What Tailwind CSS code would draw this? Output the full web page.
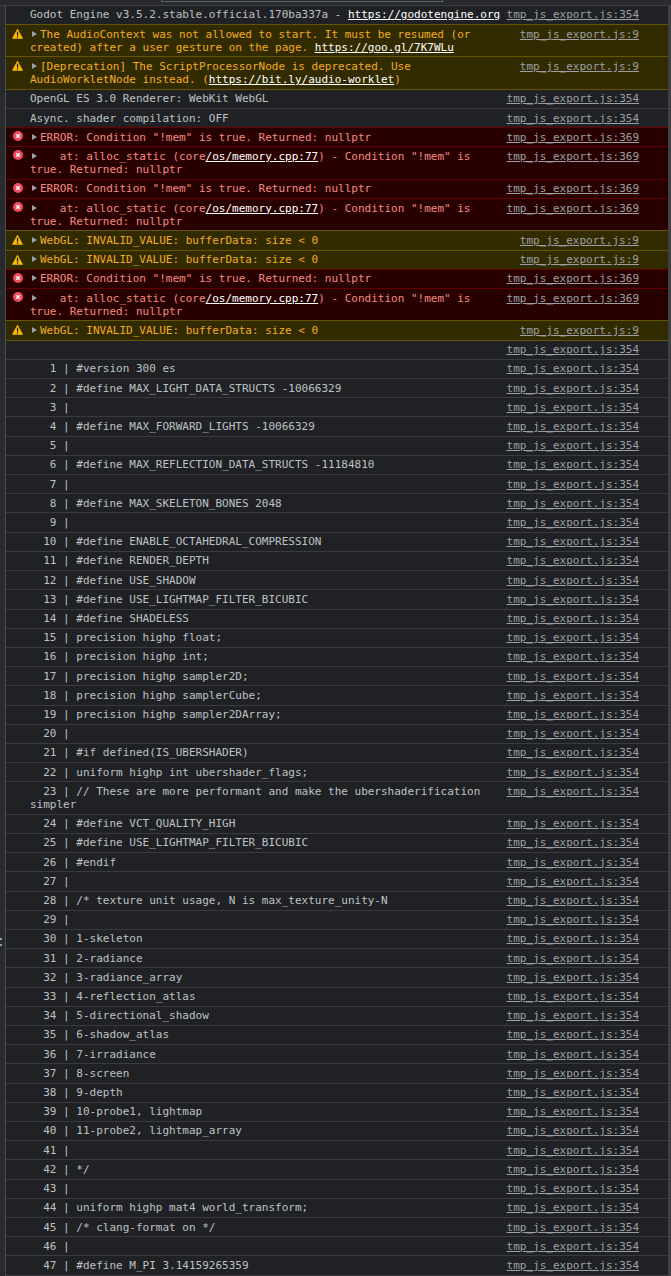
<!DOCTYPE html>
<html lang="en">
<head>
<meta charset="UTF-8">
<title>Console</title>
<script src="https://cdn.jsdelivr.net/npm/@tailwindcss/browser@4"></script>
</head>
<body class="bg-[#202124] overflow-hidden h-[1276px] font-['DejaVu_Sans_Mono',monospace] text-[11px] leading-[13.2px]">
<div class="h-[5.8px] bg-[#292a2d] border-b border-[#3c4043]">
  <div class="ml-[161px] w-[282px] h-[2px] border-x border-b border-[#5f6368]"></div>
</div>
<div class="relative flex">
  <div class="w-[6px] shrink-0 bg-[#292a2d] border-r border-[#494c50] h-[1272px]"></div>
  <div id="log" class="flex-1 min-w-0"></div>
  <div class="w-[3px] shrink-0 bg-[#3f4043]"></div>
  <div class="absolute left-0 top-[932px] w-[2px] h-[2px] bg-[#9aa0a6]"></div>
  <div class="absolute left-0 top-[938px] w-[2px] h-[2px] bg-[#9aa0a6]"></div>
</div>
<script>
  // row styles, one per console level
  const rowStyles = {
    info: 'border-b border-[#3a3b3e] text-[#bdc1c6] bg-[#202124]',
    warn: '-mt-px border-y border-[#665500] text-[#f2ab26] bg-[#332b00]',
    error: '-mt-px border-y border-[#660000] text-[#f28b82] bg-[#290000]'
  };
  const warnIcon = '<svg class="absolute left-[6px] top-[3px]" width="11" height="11" viewBox="0 0 11 11"><path d="M5.5 0.5 L10.8 10.2 Q11 10.8 10.3 10.8 L0.7 10.8 Q0 10.8 0.2 10.2 Z" fill="#fbbc04"/><rect x="4.9" y="3.6" width="1.3" height="4" fill="#202124"/><rect x="4.9" y="8.4" width="1.3" height="1.3" fill="#202124"/></svg>';
  const errorIcon = '<svg class="absolute left-[7px] top-[3px]" width="10" height="10" viewBox="0 0 11 11"><circle cx="5.5" cy="5.5" r="5.5" fill="#ee4c5c"/><path d="M3.6 3.6 L7.4 7.4 M7.4 3.6 L3.6 7.4" stroke="#fff" stroke-width="1.4"/></svg>';
  const arrow = '<span class="inline-block w-0 h-0 ml-[2px] mr-[3px] align-[1px] border-y-[3.5px] border-y-transparent border-l-[5px] border-l-[#9aa0a6]"></span>';
  const link = (t) => '<a class="text-white underline">' + t + '</a>';

  const mem = 'ERROR: Condition "!mem" is true. Returned: nullptr';
  const at = '&nbsp;&nbsp; at: alloc_static (core' + link('/os/memory.cpp:77') + ') - Condition "!mem" is true. Returned: nullptr';
  const webgl = 'WebGL: INVALID_VALUE: bufferData: size &lt; 0';

  const head = [
    ['info', 'Godot Engine v3.5.2.stable.official.170ba337a - ' + link('https://godotengine.org'), '354'],
    ['warn', 'The AudioContext was not allowed to start. It must be resumed (or created) after a user gesture on the page. ' + link('https://goo.gl/7K7WLu'), '9'],
    ['warn', '[Deprecation] The ScriptProcessorNode is deprecated. Use AudioWorkletNode instead. (' + link('https://bit.ly/audio-worklet') + ')', '9'],
    ['info', 'OpenGL ES 3.0 Renderer: WebKit WebGL', '354'],
    ['info', 'Async. shader compilation: OFF', '354'],
    ['error', mem, '369'],
    ['error', at, '369'],
    ['error', mem, '369'],
    ['error', at, '369'],
    ['warn', webgl, '9'],
    ['warn', webgl, '9'],
    ['error', mem, '369'],
    ['error', at, '369'],
    ['warn', webgl, '9'],
    ['info', '', '354']
  ];

  const shader = ['#version 300 es', '#define MAX_LIGHT_DATA_STRUCTS -10066329', '', '#define MAX_FORWARD_LIGHTS -10066329', '',
    '#define MAX_REFLECTION_DATA_STRUCTS -11184810', '', '#define MAX_SKELETON_BONES 2048', '', '#define ENABLE_OCTAHEDRAL_COMPRESSION',
    '#define RENDER_DEPTH', '#define USE_SHADOW', '#define USE_LIGHTMAP_FILTER_BICUBIC', '#define SHADELESS', 'precision highp float;',
    'precision highp int;', 'precision highp sampler2D;', 'precision highp samplerCube;', 'precision highp sampler2DArray;', '',
    '#if defined(IS_UBERSHADER)', 'uniform highp int ubershader_flags;', '// These are more performant and make the ubershaderification simpler',
    '#define VCT_QUALITY_HIGH', '#define USE_LIGHTMAP_FILTER_BICUBIC', '#endif', '', '/* texture unit usage, N is max_texture_unity-N', '',
    '1-skeleton', '2-radiance', '3-radiance_array', '4-reflection_atlas', '5-directional_shadow', '6-shadow_atlas', '7-irradiance', '8-screen',
    '9-depth', '10-probe1, lightmap', '11-probe2, lightmap_array', '', '*/', '', 'uniform highp mat4 world_transform;', '/* clang-format on */', '',
    '#define M_PI 3.14159265359'];

  let html = '';
  const addRow = (level, body, line) => {
    const expandable = level !== 'info';
    const icon = level === 'warn' ? warnIcon : level === 'error' ? errorIcon : '';
    html += '<div class="relative flow-root ' + rowStyles[level] + ' pl-[24px] pr-[29px] pt-[2.5px] pb-[2.5px] min-h-[19.2px]">'
      + icon
      + '<a class="float-right ml-[5px] text-[#9aa0a6] underline">tmp_js_export.js:' + line + '</a>'
      + (expandable ? arrow : '') + '<span class="break-words">' + body + '</span></div>';
  };
  head.forEach(r => addRow(r[0], r[1], r[2]));
  shader.forEach((s, i) => {
    const n = String(i + 1).padStart(4, '\u00a0');
    addRow('info', n + ' | ' + s, '354');
  });
  document.getElementById('log').innerHTML = html;
</script>
</body>
</html>
